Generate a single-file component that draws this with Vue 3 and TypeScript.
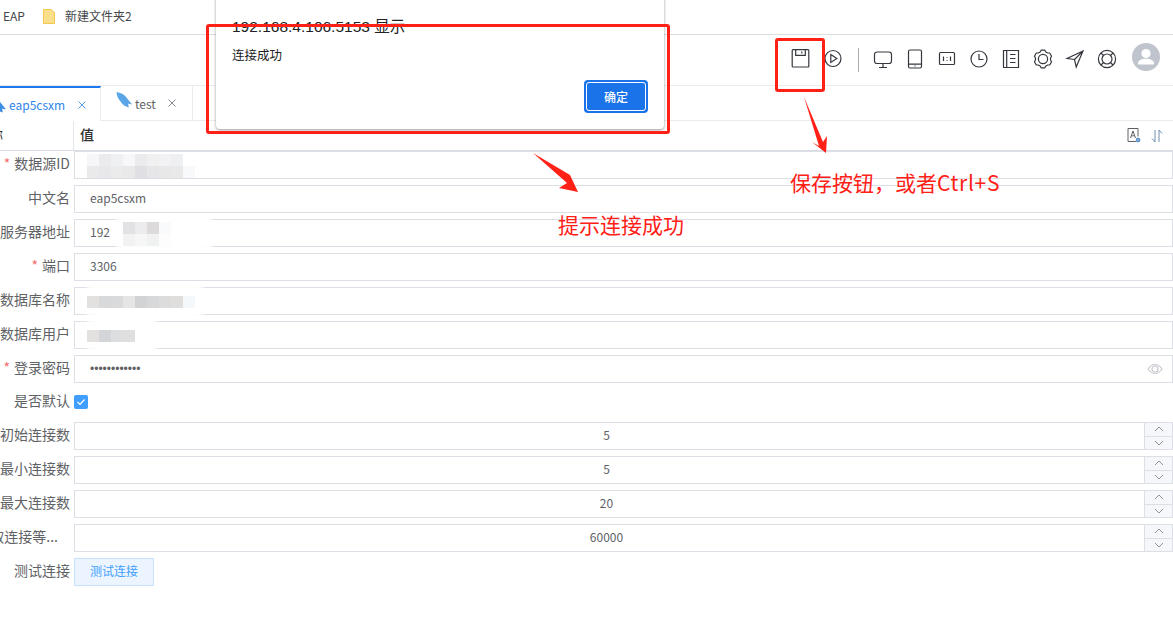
<script setup lang="ts">
interface Row {
  label: string
  required?: boolean
  kind: 'text' | 'password' | 'check' | 'number' | 'button'
  value?: string
  blob?: { left: number; width: number }
  tiles?: string[][]
  tileLeft?: number
}

const rows: Row[] = [
  { label: '数据源ID', required: true, kind: 'text', tileLeft: 12,
    tiles: [
      ['#f6f6f8', '#ebebed', '#eff0f2', '#f7f7f9', '#ebebee', '#f0f0f0', '#f2f2f4', '#eeeff1', '#ffffff'],
      ['#eaeaea', '#e8e8ea', '#ebebeb', '#e9e9ea', '#e0e0e4', '#e6e6e8', '#e8e8e8', '#e9e9e9', '#f8f9fb'],
    ] },
  { label: '中文名', kind: 'text', value: 'eap5csxm' },
  { label: '服务器地址', kind: 'text', value: '192', tileLeft: 48, blob: { left: 36, width: 107 },
    tiles: [
      ['#e2e2e4', '#ececee', '#dcdadb', '#f8fafc'],
      ['#f2f2f3', '#f6f6f7', '#f0f1f1', '#fdfdfe'],
    ] },
  { label: '端口', required: true, kind: 'text', value: '3306' },
  { label: '数据库名称', kind: 'text', tileLeft: 12, blob: { left: 6, width: 128 },
    tiles: [['#e2e1df', '#d8d9db', '#d9dadc', '#e5e5e5', '#d2d3d5', '#d7d8da', '#dcdcdc', '#dfdedc', '#f4f8fb']] },
  { label: '数据库用户', kind: 'text', tileLeft: 12, blob: { left: 6, width: 82 },
    tiles: [['#e2e1df', '#d4d5d9', '#dddee0', '#dfdfdf']] },
  { label: '登录密码', required: true, kind: 'password', value: '••••••••••••' },
  { label: '是否默认', kind: 'check' },
  { label: '初始连接数', kind: 'number', value: '5' },
  { label: '最小连接数', kind: 'number', value: '5' },
  { label: '最大连接数', kind: 'number', value: '20' },
  { label: '取连接等...', kind: 'number', value: '60000' },
  { label: '测试连接', kind: 'button', value: '测试连接' },
]

const dolphin = 'M.5 0C4.500.6 8 2.200 10.500 5.500c1.600 2.200 3.300 4.500 5.500 6.800-1.600.2-2.900-.1-3.900-.7l.7 3.900C9 14.500 6 12.500 4.200 9 2.200 7 .8 3.800.5 0z'
</script>

<template>
  <div class="page">
    <div class="bookmarks">
      <span class="bm-text">EAP</span>
      <svg class="folder" width="12" height="15" viewBox="0 0 12 15">
        <path d="M.5.5h7.500l3.500 3v11H.5z" fill="#fcdf8b" stroke="#f3c94f" />
      </svg>
      <span class="bm-text">新建文件夹2</span>
    </div>

    <div class="toolbar">
      <span class="tool">
        <svg viewBox="0 0 20 20"><path d="M2 .7h15a.8.8 0 0 1 .8.8v15.700a.8.8 0 0 1-.8.8H2a.8.8 0 0 1-.8-.8V1.500A.8.8 0 0 1 2 .7zM4.700.9v5.500h9.600V.9M10.800 2.500v2" /></svg>
      </span>
      <span class="tool">
        <svg viewBox="0 0 20 20"><circle cx="10" cy="9.500" r="8" /><path d="M7.800 5.500l6 4-6 4z" /></svg>
      </span>
      <span class="divider"></span>
      <span class="tool">
        <svg viewBox="0 0 20 20"><rect x="1.500" y="3" width="17" height="11.500" rx="2.500" /><path d="M10 14.500v4M6 18.500h8" /></svg>
      </span>
      <span class="tool">
        <svg viewBox="0 0 20 20"><rect x="3.500" y="1" width="13" height="18" rx="1.500" /><path d="M3.500 15.200h13M10 16.600v.8" /></svg>
      </span>
      <span class="tool">
        <svg viewBox="0 0 20 20"><rect x="2.500" y="3.500" width="15" height="12" rx="1" /><path d="M6.500 7.500v4.500M13.500 7.500v4.500M10 8v.8M10 11v.8" /></svg>
      </span>
      <span class="tool">
        <svg viewBox="0 0 20 20"><circle cx="10" cy="10" r="8" /><path d="M10 5v5.500h4.500" /></svg>
      </span>
      <span class="tool">
        <svg viewBox="0 0 20 20"><path d="M2.500 1.500h15v17h-15zM5.700 1.500v17M9 5.500h5.500M9 9.500h5.500M9 13.500h5.500" /></svg>
      </span>
      <span class="tool">
        <svg viewBox="0 0 20 20"><circle cx="10" cy="10" r="4.600" /><polygon stroke-linejoin="round" points="7.150,2.950 8.130,1.200 11.870,1.200 12.850,2.950 14.680,4.010 16.690,3.980 18.560,7.220 17.530,8.940 17.530,11.060 18.560,12.780 16.690,16.020 14.680,15.990 12.850,17.050 11.870,18.800 8.130,18.800 7.150,17.050 5.320,15.990 3.310,16.020 1.440,12.780 2.470,11.060 2.470,8.940 1.440,7.220 3.310,3.980 5.320,4.010" /></svg>
      </span>
      <span class="tool">
        <svg viewBox="0 0 20 20"><path d="M18 2L2 9.500l7.500 1 1.700 7.500z M18 2L9.500 10.500" /></svg>
      </span>
      <span class="tool">
        <svg viewBox="0 0 20 20"><circle cx="10" cy="10" r="8.600" /><circle cx="10" cy="10" r="5" /><path d="M4 4l2.500 2.500M16 4l-2.500 2.500M4 16l2.500-2.500M16 16l-2.500-2.500" /></svg>
      </span>
      <span class="avatar">
        <svg width="28" height="28" viewBox="0 0 28 28">
          <circle cx="14" cy="10.500" r="4.600" fill="#fff" />
          <path d="M6 20.500c0-3 3-4.700 8-4.700s8 1.700 8 4.700c0 .6-.4 1-1 1H7c-.6 0-1-.4-1-1z" fill="#fff" />
        </svg>
      </span>
    </div>

    <div class="tabs">
      <div class="tab tab-active">
        <svg class="dolphin" width="16" height="16" viewBox="0 0 16 16"><path :d="dolphin" fill="#3d8fe6" /></svg>
        <span class="tab-name">eap5csxm</span>
        <svg class="tab-close" width="8" height="8" viewBox="0 0 8 8" fill="none" stroke="#5a9eea"><path d="M.5.5l7 7M7.500.5l-7 7" /></svg>
      </div>
      <div class="tab tab-idle">
        <svg class="dolphin" width="16" height="16" viewBox="0 0 16 16"><path :d="dolphin" fill="#5aa5e8" /></svg>
        <span class="tab-name">test</span>
        <svg class="tab-close" width="8" height="8" viewBox="0 0 8 8" fill="none" stroke="#86898f"><path d="M.5.5l7 7M7.500.5l-7 7" /></svg>
      </div>
      <div class="tab-rest"></div>
    </div>

    <div class="thead">
      <div class="th-key"><span class="th-key-text">称</span></div>
      <div class="th-val">
        <span class="th-val-text">值</span>
        <span class="th-icons">
          <svg width="15" height="15" viewBox="0 0 15 15" fill="none" stroke="#606266">
            <path d="M9 13.500H1V.5h10v8" />
            <path d="M3.500 10l2.500-7 2.500 7M4.500 7.800h3" />
            <path d="M11 9.500v5M8.800 12h4.700M9.500 10.500h3v3h-3z" stroke="#5b8fc9" />
          </svg>
          <svg width="12" height="14" viewBox="0 0 12 14" fill="none" stroke="#6f8fb0">
            <path d="M4 1v12L1 9.500" />
            <path d="M8 13V1l3 3.500" />
          </svg>
        </span>
      </div>
    </div>

    <div class="form">
      <div v-for="r in rows" :key="r.label" class="row" :class="{ 'row-check': r.kind === 'check' }">
        <div class="label" :class="{ 'label-cut': r.label.endsWith('...') }">
          <i v-if="r.required" class="star">*</i>{{ r.label }}
        </div>

        <div v-if="r.kind === 'text'" class="input">
          <span v-if="r.blob" class="blob" :style="{ left: r.blob.left + 'px', width: r.blob.width + 'px' }"></span>
          <span class="input-text">{{ r.value }}</span>
          <span v-if="r.tiles" class="mosaic" :style="{ left: r.tileLeft + 'px' }">
            <span v-for="(line, i) in r.tiles" :key="i" class="mosaic-line">
              <span v-for="(c, j) in line" :key="j" class="tile" :style="{ background: c }"></span>
            </span>
          </span>
        </div>

        <div v-else-if="r.kind === 'password'" class="input">
          <span class="input-text pass">{{ r.value }}</span>
          <svg class="eye" width="16" height="12" viewBox="0 0 16 12" fill="none" stroke="#c8cacf" stroke-width="1.200">
            <path d="M1 6c2-3 4.300-4.500 7-4.500S13 3 15 6c-2 3-4.300 4.500-7 4.500S3 9 1 6z" />
            <circle cx="8" cy="6" r="3" />
          </svg>
        </div>

        <div v-else-if="r.kind === 'check'" class="checkbox">
          <svg width="14" height="14" viewBox="0 0 14 14" fill="none" stroke="#fff" stroke-width="1.200">
            <path d="M3.500 7l2.500 2.500 4.500-5" />
          </svg>
        </div>

        <div v-else-if="r.kind === 'number'" class="input number">
          <span class="number-value">{{ r.value }}</span>
          <span class="stepper">
            <span class="step">
              <svg width="10" height="6" viewBox="0 0 10 6" fill="none" stroke="#909399"><path d="M1 5l4-4 4 4" /></svg>
            </span>
            <span class="step step-down">
              <svg width="10" height="6" viewBox="0 0 10 6" fill="none" stroke="#909399"><path d="M1 1l4 4 4-4" /></svg>
            </span>
          </span>
        </div>

        <button v-else class="test-btn" type="button">{{ r.value }}</button>
      </div>
    </div>

    <div class="alert">
      <div class="alert-title">192.168.4.106.5153 显示</div>
      <div class="alert-msg">连接成功</div>
      <div class="alert-actions">
        <button class="alert-btn" type="button">确定</button>
      </div>
    </div>

    <div class="mark mark-dialog"></div>
    <div class="mark mark-save"></div>
    <svg class="arrows" width="1173" height="629" viewBox="0 0 1173 629">
      <polygon points="533,153 570,175 578,192 559,188 567,183" fill="#ff2016" />
      <polygon points="804,97 823,142 827,136 826,153 812,142 819,146" fill="#ff2016" />
    </svg>
    <div class="note note-ok">提示连接成功</div>
    <div class="note note-save">保存按钮，或者<span class="note-latin">Ctrl+S</span></div>
  </div>
</template>

<style scoped>
.page {
  position: relative;
  width: 1173px;
  height: 629px;
  overflow: hidden;
  display: flex;
  flex-direction: column;
  background: #fff;
  font-family: "Noto Sans CJK SC", "Open Sans", sans-serif;
  color: #606266;
}
.bookmarks {
  height: 34px;
  box-sizing: content-box;
  border-bottom: 1px solid #dadce0;
  display: flex;
  align-items: center;
  padding-left: 3px;
  flex: none;
}
.bm-text {
  font-size: 12px;
  color: #45474b;
  margin-bottom: 3px;
}
.folder {
  margin: 0 10px 2px 18px;
}
.toolbar {
  height: 50px;
  flex: none;
  border-bottom: 1px solid #e9ebef;
  display: flex;
  align-items: flex-start;
  justify-content: flex-end;
  padding-right: 13px;
}
.tool {
  width: 32px;
  display: flex;
  justify-content: center;
  margin-top: 14px;
}
.tool svg {
  width: 20px;
  height: 20px;
  fill: none;
  stroke: #35383f;
  stroke-width: 1.200;
}
.divider {
  width: 1px;
  height: 24px;
  background: #a8abb2;
  margin: 13px 8px 0 9px;
}
.avatar {
  width: 28px;
  height: 28px;
  border-radius: 50%;
  background: #c0c4cc;
  margin: 8px 0 0 9px;
  display: block;
  overflow: hidden;
}
.tabs {
  height: 35px;
  flex: none;
  display: flex;
}
.tab {
  height: 100%;
  box-sizing: border-box;
  display: flex;
  align-items: center;
  font-size: 12px;
  overflow: hidden;
  flex: none;
}
.tab-active {
  width: 101px;
  border-top: 2px solid #1e78ee;
  border-right: 1px solid #e9ebef;
  color: #2f86ea;
}
.tab-idle {
  width: 92px;
  border-right: 1px solid #e9ebef;
  border-bottom: 1px solid #e9ebef;
  padding-left: 15px;
  color: #606266;
}
.tab-rest {
  flex: 1;
  border-bottom: 1px solid #e9ebef;
}
.dolphin {
  flex: none;
  margin-top: -6px;
  margin-right: 3px;
}
.tab-active .dolphin {
  margin-left: -10px;
  margin-top: 0;
}
.tab-name {
  white-space: nowrap;
}
.tab-close {
  flex: none;
  margin-left: 13px;
}
.tab-idle .tab-close {
  margin-left: 12px;
}
.thead {
  height: 30px;
  flex: none;
  box-sizing: border-box;
  display: flex;
  border-bottom: 1px solid #d8dbe3;
}
.th-key {
  width: 74px;
  box-sizing: border-box;
  border-right: 1px solid #e4e7ed;
  display: flex;
  align-items: center;
  overflow: hidden;
}
.th-key-text {
  font-size: 13px;
  color: #303133;
  margin-left: -10px;
  margin-bottom: 3px;
}
.th-val {
  flex: 1;
  display: flex;
  align-items: center;
  justify-content: space-between;
  padding: 0 10px 0 6px;
}
.th-val-text {
  font-size: 14px;
  font-weight: 500;
  color: #303133;
  margin-bottom: 4px;
}
.th-icons {
  display: flex;
  align-items: center;
  gap: 9px;
}
.form {
  display: flex;
  flex-direction: column;
  gap: 6px;
}
.row {
  display: flex;
  height: 28px;
  flex: none;
}
.row-check {
  height: 27px;
}
.label {
  width: 74px;
  flex: none;
  box-sizing: border-box;
  padding: 0 4px 5px 0;
  display: flex;
  justify-content: flex-end;
  align-items: center;
  font-size: 14px;
  white-space: nowrap;
  overflow: hidden;
  color: #606266;
}
.label-cut {
  padding-right: 16px;
}
.star {
  color: #f56c6c;
  font-style: normal;
  margin-right: 4px;
}
.input {
  position: relative;
  flex: 1;
  box-sizing: border-box;
  border: 1px solid #dcdfe6;
  display: flex;
  align-items: center;
  padding-left: 15px;
  font-size: 12px;
  color: #606266;
}
.input-text {
  position: relative;
  white-space: nowrap;
  margin-bottom: 3px;
}
.pass {
  font-family: "Liberation Sans", sans-serif;
  font-size: 12px;
  margin-bottom: 0;
}
.blob {
  position: absolute;
  top: -2px;
  bottom: -2px;
  background: #fff;
  border-radius: 12px;
  filter: blur(1px);
}
.mosaic {
  position: absolute;
  top: calc(50% + 1px);
  transform: translateY(-50%);
  display: flex;
  flex-direction: column;
}
.mosaic-line {
  display: flex;
  height: 12px;
}
.tile {
  width: 12px;
  height: 12px;
}
.eye {
  position: absolute;
  right: 9px;
  top: 7px;
}
.checkbox {
  width: 14px;
  height: 14px;
  border-radius: 2px;
  background: #409eff;
  margin-top: 6px;
  display: flex;
}
.number {
  padding-left: 0;
}
.number-value {
  flex: 1;
  text-align: center;
  padding-right: 6px;
  margin-bottom: 3px;
}
.stepper {
  width: 28px;
  height: 100%;
  box-sizing: border-box;
  flex: none;
  border-left: 1px solid #dcdfe6;
  background: #f5f7fa;
  display: flex;
  flex-direction: column;
}
.step {
  flex: 1;
  display: flex;
  align-items: center;
  justify-content: center;
}
.step-down {
  border-top: 1px solid #dcdfe6;
}
.test-btn {
  width: 80px;
  height: 28px;
  box-sizing: border-box;
  border: 1px solid #c6e2ff;
  background: #ecf5ff;
  color: #409eff;
  font: inherit;
  font-size: 12px;
  padding: 0 0 3px;
}
.alert {
  position: absolute;
  left: 216px;
  top: -10px;
  width: 448px;
  height: 139px;
  box-sizing: border-box;
  background: #fff;
  border-radius: 4px;
  box-shadow: 0 1px 3px rgba(60, 64, 67, 0.55);
  padding: 26px 16px 0;
  display: flex;
  flex-direction: column;
  color: #202124;
}
.alert-title {
  font-size: 15.500px;
  line-height: 22px;
  font-family: "Liberation Sans", "Noto Sans CJK SC", sans-serif;
}
.alert-msg {
  font-size: 12.500px;
  line-height: 18px;
  margin-top: 8px;
}
.alert-actions {
  display: flex;
  justify-content: flex-end;
  margin-top: 16px;
}
.alert-btn {
  width: 64px;
  height: 33px;
  box-sizing: border-box;
  border-radius: 4px;
  background: #1a73e8;
  color: #fff;
  font: inherit;
  font-size: 12px;
  font-weight: 500;
  padding: 0;
  border: 0;
  position: relative;
}
.alert-btn::after {
  content: "";
  position: absolute;
  inset: 2px;
  border: 1px solid #fff;
  border-radius: 3px;
}
.mark {
  position: absolute;
  box-sizing: border-box;
  border: 3px solid #ff2016;
  border-radius: 3px;
}
.mark-dialog {
  left: 206px;
  top: 24px;
  width: 464px;
  height: 110px;
}
.mark-save {
  left: 775px;
  top: 38px;
  width: 50px;
  height: 54px;
}
.arrows {
  position: absolute;
  left: 0;
  top: 0;
  pointer-events: none;
}
.note {
  position: absolute;
  font-size: 21px;
  line-height: 28px;
  color: #ff2016;
  white-space: nowrap;
}
.note-latin {
  letter-spacing: 0.700px;
}
.note-ok {
  left: 558px;
  top: 210px;
}
.note-save {
  left: 790px;
  top: 168px;
}
</style>
